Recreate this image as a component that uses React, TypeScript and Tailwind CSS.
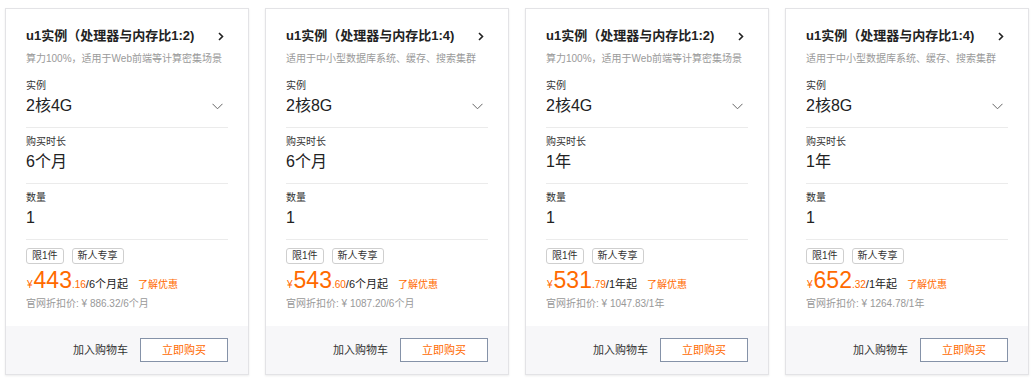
import React from "react";

interface Plan {
  title: string;
  desc: string;
  spec: string;
  duration: string;
  price: string;
  cents: string;
  unit: string;
  origin: string;
}

const plans: Plan[] = [
  { title: "u1实例（处理器与内存比1:2)", desc: "算力100%，适用于Web前端等计算密集场景", spec: "2核4G", duration: "6个月", price: "443", cents: ".16", unit: "/6个月起", origin: "官网折扣价: ¥ 886.32/6个月" },
  { title: "u1实例（处理器与内存比1:4)", desc: "适用于中小型数据库系统、缓存、搜索集群", spec: "2核8G", duration: "6个月", price: "543", cents: ".60", unit: "/6个月起", origin: "官网折扣价: ¥ 1087.20/6个月" },
  { title: "u1实例（处理器与内存比1:2)", desc: "算力100%，适用于Web前端等计算密集场景", spec: "2核4G", duration: "1年", price: "531", cents: ".79", unit: "/1年起", origin: "官网折扣价: ¥ 1047.83/1年" },
  { title: "u1实例（处理器与内存比1:4)", desc: "适用于中小型数据库系统、缓存、搜索集群", spec: "2核8G", duration: "1年", price: "652", cents: ".32", unit: "/1年起", origin: "官网折扣价: ¥ 1264.78/1年" },
];

const Field = ({ label, value, first, select }: { label: string; value: string; first?: boolean; select?: boolean }) => (
  <div className={first ? "pt-[10px] pb-[10px] border-b border-[#ebebeb]" : "pt-[6px] pb-[10px] border-b border-[#ebebeb]"}>
    <div className="text-[10px] leading-4 text-[#333]">{label}</div>
    <div className="mt-px flex items-center justify-between">
      <span className="text-[16px] leading-[22px] text-[#222]">{value}</span>
      {select && (
        <svg width="11" height="7" viewBox="0 0 11 7" className="mr-[5px]">
          <path d="M0.5 0.8 L5.5 5.8 L10.5 0.8" fill="none" stroke="#666" strokeWidth="1" />
        </svg>
      )}
    </div>
  </div>
);

const Card = ({ plan }: { plan: Plan }) => (
  <div className="w-[244px] h-[367px] flex flex-col border border-[#e3e3e6] bg-white shadow-[0_1px_2px_rgba(0,0,0,0.08)]">
    <div className="flex-1 px-5 pt-[17px]">
      <div className="flex items-center justify-between">
        <span className="text-[13px] leading-5 font-bold text-[#222]">{plan.title}</span>
        <svg width="6" height="9" viewBox="0 0 6 9" className="mr-[4px]">
          <path d="M1 1 L4.5 4.5 L1 8" fill="none" stroke="#222" strokeWidth="1.6" />
        </svg>
      </div>
      <div className="mt-[4px] text-[10px] leading-[18px] text-[#9a9a9a] whitespace-nowrap">{plan.desc}</div>
      <Field label="实例" value={plan.spec} first select />
      <Field label="购买时长" value={plan.duration} />
      <Field label="数量" value="1" />
      <div className="pt-[8px] flex gap-2">
        <span className="h-4 px-[5px] border border-[#cfcfcf] rounded-[3px] text-[10px] leading-[14px] text-[#333]">限1件</span>
        <span className="h-4 px-[5px] border border-[#cfcfcf] rounded-[3px] text-[10px] leading-[14px] text-[#333]">新人专享</span>
      </div>
      <div className="mt-[5px] flex items-baseline whitespace-nowrap leading-[22px]">
        <span className="text-[10px] text-[#ff6a00] ml-px mr-px">¥</span>
        <span className="text-[23px] text-[#ff6a00]">{plan.price}</span>
        <span className="text-[10px] text-[#ff6a00]">{plan.cents}</span>
        <span className="text-[11px] text-[#222]">{plan.unit}</span>
        <span className="ml-[10px] text-[10px] text-[#ff6a00]">了解优惠</span>
      </div>
      <div className="text-[10px] leading-4 text-[#999]">{plan.origin}</div>
    </div>
    <div className="h-[48px] bg-[#f7f7f9] flex items-center justify-end pr-5 gap-3">
      <span className="text-[11px] text-[#333]">加入购物车</span>
      <button className="w-[88px] h-6 border border-[#8592a8] bg-white text-[11px] leading-[22px] text-[#ff6a00]">立即购买</button>
    </div>
  </div>
);

export default function App() {
  return (
    <div
      className="w-[1033px] h-[379px] bg-white pt-2 pl-[5px] flex gap-4"
      style={{ fontFamily: '"Liberation Sans", "Noto Sans CJK SC", sans-serif' }}
    >
      {plans.map((p, i) => (
        <Card key={i} plan={p} />
      ))}
    </div>
  );
}
